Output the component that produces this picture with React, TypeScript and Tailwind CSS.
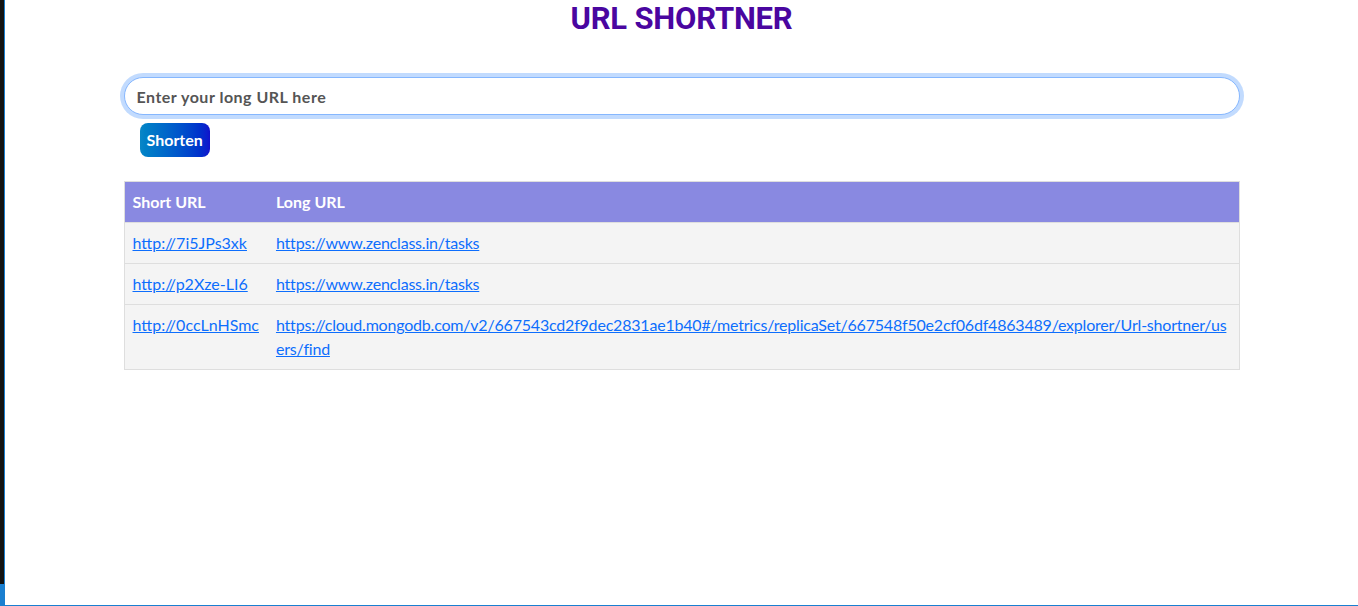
import React from "react";

const rows = [
  { short: "http://7i5JPs3xk", long: "https://www.zenclass.in/tasks" },
  { short: "http://p2Xze-LI6", long: "https://www.zenclass.in/tasks" },
  {
    short: "http://0ccLnHSmc",
    long: "https://cloud.mongodb.com/v2/667543cd2f9dec2831ae1b40#/metrics/replicaSet/667548f50e2cf06df4863489/explorer/Url-shortner/users/find",
  },
];

const App = () => {
  return (
    <div className="flex h-[606px] w-full bg-white font-['Segoe_UI','Lato','Noto_Sans',sans-serif]">
      <div className="flex w-[4px] flex-col">
        <div className="flex-1 bg-[#121212]" />
        <div className="h-[22px] bg-[#1a7fd0]" />
      </div>
      <div className="flex-1 border-b border-l border-[#1a7fd0]">
        <h1 className="pt-[1px] text-center font-['Roboto',sans-serif] text-[31px] font-bold leading-[36px] tracking-[-0.2px] text-[#4a06a0]">
          URL SHORTNER
        </h1>
        <div className="mx-auto mt-[40px] w-[1116px]">
          <input
            type="text"
            placeholder="Enter your long URL here"
            className="h-[38px] w-full rounded-full border border-[#86b7fe] bg-white px-3 text-base font-bold tracking-[0.5px] text-[#333] shadow-[0_0_0_4px_rgba(13,110,253,0.25)] outline-none placeholder:text-[#555]"
          />
          <button className="ml-4 mt-2 rounded-lg bg-gradient-to-r from-[#0a86c6] to-[#1010cc] px-[7px] py-[5px] text-base font-bold leading-6 text-white">
            Shorten
          </button>

          <table className="mt-[24px] w-full border-collapse border border-[#dedede] text-base leading-6">
            <thead>
              <tr className="bg-[#8989e1] text-left text-white">
                <th className="w-[142px] px-[8px] py-2 font-bold">Short URL</th>
                <th className="px-[9px] py-2 font-bold">Long URL</th>
              </tr>
            </thead>
            <tbody>
              {rows.map((r, i) => (
                <tr key={i} className="border-t border-[#dedede] bg-[#f4f4f4] align-top">
                  <td className="px-[8px] py-2">
                    <a href="#" className="text-[#0d6efd] underline">{r.short}</a>
                  </td>
                  <td className="break-all px-[9px] py-2 tracking-[-0.2px]">
                    <a href="#" className="text-[#0d6efd] underline">{r.long}</a>
                  </td>
                </tr>
              ))}
            </tbody>
          </table>
        </div>
      </div>
    </div>
  );
};

export default App;
